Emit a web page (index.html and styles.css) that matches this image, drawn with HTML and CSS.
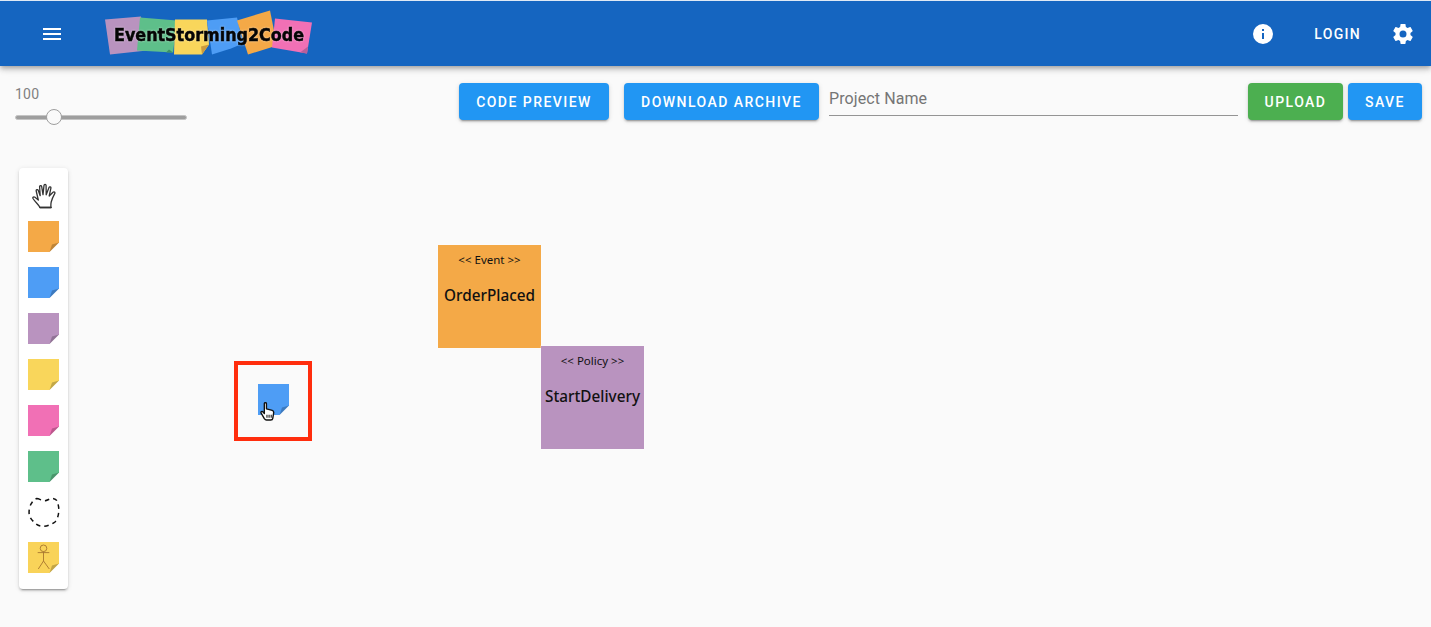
FILE: index.html
```html
<!DOCTYPE html>
<html lang="en">
<head>
<meta charset="utf-8">
<title>EventStorming2Code</title>
<link rel="stylesheet" href="styles.css">
</head>
<body>
<svg class="defs" width="0" height="0" aria-hidden="true">
  <symbol id="note" viewBox="0 0 31 31">
    <polygon points="0,0 31,0 31,21.5 21.5,31 0,31" fill="currentColor"/>
    <polygon points="21.5,31 31,21.5 24,23.5" fill="#000" fill-opacity=".22"/>
  </symbol>
</svg>
<header class="appbar">
  <button class="icon-btn menu-btn" aria-label="menu">
    <svg class="icon" viewBox="0 0 24 24"><path d="M3,6H21V8H3V6M3,11H21V13H3V11M3,16H21V18H3V16Z"/></svg>
  </button>
  <svg class="logo" viewBox="104 9.5 210 48" role="img">
    <polygon points="105,19 141,16 147,50 110,54" fill="#b993bf"/>
    <polygon points="140,17 177,20 173,52 137,50" fill="#5ebf8a"/>
    <polygon points="169,49 173,52 166,52" fill="#3f8f63"/>
    <polygon points="175,19 207,19 209,44 202,54 174,54" fill="#f9d65b"/>
    <polygon points="202,54 209,44 201,46" fill="#c99a3e"/>
    <polygon points="207,20 237,17 243,43 231,48 212,54" fill="#4e9df5"/>
    <polygon points="237,20 270,10 277,45 248,54" fill="#f4a947"/>
    <polygon points="275,18 312,22 307,53 272,47" fill="#f170b5"/>
    <polygon points="300,52 307,53 308,46" fill="#b85f9a"/>
    <text class="logo-text" x="114" y="40" textLength="190" lengthAdjust="spacingAndGlyphs">EventStorming2Code</text>
  </svg>
  <div class="appbar-right">
    <svg class="icon info" viewBox="0 0 24 24"><path d="M13,9H11V7H13M13,17H11V11H13M12,2A10,10 0 0,0 2,12A10,10 0 0,0 12,22A10,10 0 0,0 22,12A10,10 0 0,0 12,2Z"/></svg>
    <span class="login">LOGIN</span>
    <svg class="icon gear" viewBox="0 0 24 24"><path d="M12,15.5A3.5,3.5 0 0,1 8.5,12A3.5,3.5 0 0,1 12,8.5A3.5,3.5 0 0,1 15.5,12A3.5,3.5 0 0,1 12,15.5M19.43,12.97C19.47,12.65 19.5,12.33 19.5,12C19.5,11.67 19.47,11.34 19.43,11L21.54,9.37C21.73,9.22 21.78,8.95 21.66,8.73L19.66,5.27C19.54,5.05 19.27,4.96 19.05,5.05L16.56,6.05C16.04,5.66 15.5,5.32 14.87,5.07L14.5,2.42C14.46,2.18 14.25,2 14,2H10C9.75,2 9.54,2.18 9.5,2.42L9.13,5.07C8.5,5.32 7.96,5.66 7.44,6.05L4.95,5.05C4.73,4.96 4.46,5.05 4.34,5.27L2.34,8.73C2.21,8.95 2.27,9.22 2.46,9.37L4.57,11C4.53,11.34 4.5,11.67 4.5,12C4.5,12.33 4.53,12.65 4.57,12.97L2.46,14.63C2.27,14.78 2.21,15.05 2.34,15.27L4.34,18.73C4.46,18.95 4.73,19.03 4.95,18.95L7.44,17.94C7.96,18.34 8.5,18.68 9.13,18.93L9.5,21.58C9.54,21.82 9.75,22 10,22H14C14.25,22 14.46,21.82 14.5,21.58L14.87,18.93C15.5,18.67 16.04,18.34 16.56,17.94L19.05,18.95C19.27,19.03 19.54,18.95 19.66,18.73L21.66,15.27C21.78,15.05 21.73,14.78 21.54,14.63L19.43,12.97Z"/></svg>
  </div>
</header>
<main class="board">
  <section class="toolbar">
    <div class="zoom">
      <div class="zoom-value">100</div>
      <div class="slider"><span class="thumb"></span></div>
    </div>
    <div class="actions">
      <button class="btn blue code">CODE PREVIEW</button>
      <button class="btn blue download">DOWNLOAD ARCHIVE</button>
      <label class="field"><span>Project Name</span></label>
      <button class="btn green">UPLOAD</button>
      <button class="btn blue save">SAVE</button>
    </div>
  </section>
  <nav class="palette">
    <svg class="hand" viewBox="0 0 24 26" fill="#fff" stroke="#333" stroke-width="1.3" stroke-linejoin="round" stroke-linecap="round">
      <path d="M8 24.5 C6.5 21.5 3.5 19.5 1 15.5 C0.4 14.3 1.8 13.4 3 14.3 L6.3 17 L4.2 8 C3.9 6.6 5.7 6 6.2 7.3 L8.2 12.7 L7.6 3.8 C7.5 2.4 9.4 2.2 9.7 3.6 L11 11.7 L12 2.4 C12.2 1 14 1.1 14.1 2.5 L14.2 11.8 L17 4.6 C17.5 3.3 19.2 3.9 18.9 5.2 L17.2 13 L21 9.2 C22 8.3 23.4 9.4 22.7 10.6 C21.2 13.3 20 16 19.2 19 C18.8 21 18.8 22.8 19 24.5 Z"/>
      <path d="M8 24.5 H19" stroke-width="1.6"/>
    </svg>
    <svg class="note orange"><use href="#note"/></svg>
    <svg class="note blue-note"><use href="#note"/></svg>
    <svg class="note purple"><use href="#note"/></svg>
    <svg class="note yellow"><use href="#note"/></svg>
    <svg class="note pink"><use href="#note"/></svg>
    <svg class="note green-note"><use href="#note"/></svg>
    <svg class="note boundary-note" viewBox="0 0 31 31"><path class="boundary" d="M8.7 .6 C11.5 .8 14 2.8 17 2.7 C19.5 2.6 22.5 0 25 .4 C27.5 .8 28.8 2 29.3 3.7 C30.5 7 31.2 11 30.6 15 C30.2 18.5 29 22 27 24 C23.5 26.5 19 28.3 15 28.4 C12 28.3 9 27 7 25 C4.5 22.8 2 20 1.3 17 C.6 13 1.5 8 3.7 5 C5 3 6.8 1 8.7 .6Z"/></svg>
    <svg class="note actor" viewBox="0 0 31 31">
      <use href="#note" width="31" height="31"/>
      <g class="stick"><circle cx="15.5" cy="6.3" r="3.3"/><path d="M15.5 9.6V19M9.7 10.6H21.3M15.5 19L10.3 27M15.5 19L21.3 27"/></g>
    </svg>
  </nav>
  <div class="sticker event">
    <div class="stereotype">&lt;&lt; Event &gt;&gt;</div>
    <div class="name">OrderPlaced</div>
  </div>
  <div class="sticker policy">
    <div class="stereotype">&lt;&lt; Policy &gt;&gt;</div>
    <div class="name">StartDelivery</div>
  </div>
  <div class="highlight">
    <svg class="note blue-note"><use href="#note"/></svg>
    <svg class="pointer" viewBox="0 0 14 18" fill="#fff" stroke="#111" stroke-width="1.3" stroke-linejoin="round">
      <path d="M4 1.5 C4 .5 6 .5 6 1.5 V6.5 L11.5 8 C12.8 8.4 13 9.3 12.8 10.5 L12 15.5 C11.9 16.5 11 17 10 17 H6 C5 17 4.5 16.5 4 15.8 L1 10.5 C.4 9.3 1.8 8.5 2.7 9.4 L4 11Z"/>
      <path d="M6.5 12V15M8.5 12V15M10.5 12V15" fill="none" stroke-width="1"/>
    </svg>
  </div>
</main>
</body>
</html>
```
FILE: styles.css
```css
* { box-sizing: border-box; }
html, body { margin: 0; height: 100%; }
body {
  width: 1431px;
  height: 627px;
  overflow: hidden;
  background: #fafafa;
  font-family: Roboto, "Liberation Sans", sans-serif;
  display: flex;
  flex-direction: column;
}
.defs { position: absolute; }
.appbar {
  position: relative;
  z-index: 2;
  height: 66px;
  flex: none;
  display: flex;
  align-items: center;
  background: #1565c0;
  border-top: 1px solid #dfe9f5;
  box-shadow: 0 2px 4px -1px rgba(0,0,0,.2), 0 4px 5px rgba(0,0,0,.14), 0 1px 10px rgba(0,0,0,.12);
  color: #fff;
  padding-left: 28px;
}
.icon { width: 24px; height: 24px; fill: #fff; display: block; }
.icon-btn {
  width: 48px;
  height: 48px;
  padding: 12px;
  border: 0;
  background: none;
}
.logo { width: 210px; height: 48px; margin-left: 28px; overflow: visible; }
.logo-text {
  font-family: "DejaVu Sans", sans-serif;
  font-weight: 700;
  font-size: 18px;
  fill: #050505;
  stroke: #050505;
  stroke-width: .5px;
  filter: drop-shadow(0 0 1px rgba(255,255,255,.55));
}
.appbar-right {
  margin-left: auto;
  display: flex;
  align-items: center;
  padding-right: 16px;
}
.login {
  font-size: 14px;
  font-weight: 500;
  letter-spacing: 1.3px;
  margin: 0 30px 0 39px;
}
.board {
  position: relative;
  flex: 1;
  min-height: 0;
}
.toolbar {
  display: flex;
  justify-content: space-between;
  padding: 17px 9px 0 15px;
  height: 102px;
}
.zoom { width: 172px; padding-top: 3px; }
.zoom-value {
  font-size: 14px;
  line-height: 16px;
  color: #808080;
  letter-spacing: .2px;
}
.slider {
  position: relative;
  height: 5px;
  margin-top: 13px;
  border-radius: 3px;
  background: #9e9e9e;
  border: 1px solid #c4c4c4;
}
.thumb {
  position: absolute;
  left: 30px;
  top: -7px;
  width: 16px;
  height: 16px;
  border-radius: 50%;
  background: #fafafa;
  border: 1px solid #9e9e9e;
}
.actions { display: flex; align-items: flex-start; }
.btn {
  height: 37px;
  border: 0;
  border-radius: 4px;
  color: #fff;
  font: 500 14px Roboto, sans-serif;
  letter-spacing: 1.45px;
  padding: 0;
  width: 95px;
  box-shadow: 0 3px 1px -2px rgba(0,0,0,.2), 0 2px 2px rgba(0,0,0,.14), 0 1px 5px rgba(0,0,0,.12);
}
.blue { background: #2196f3; }
.green { background: #4caf50; }
.code { width: 150px; }
.download { margin-left: 15px; width: 195px; }
.save { margin-left: 5px; width: 74px; }
.field {
  width: 409px;
  height: 33px;
  margin: 0 10px;
  border-bottom: 1px solid #949494;
  color: #757575;
  font-size: 16px;
  line-height: 32px;
  display: block;
  letter-spacing: .1px;
}
.palette {
  width: 49px;
  margin-left: 19px;
  height: 421px;
  background: #fff;
  border-radius: 4px;
  box-shadow: 0 3px 1px -2px rgba(0,0,0,.2), 0 2px 2px rgba(0,0,0,.14), 0 1px 5px rgba(0,0,0,.12);
  display: flex;
  flex-direction: column;
  align-items: center;
  padding-top: 15px;
  row-gap: 15px;
}
.hand { width: 24px; height: 26px; margin-left: 1px; margin-bottom: -3px; flex: none; }
.note { width: 31px; height: 31px; flex: none; display: block; overflow: visible; }
.palette .actor { margin-top: -2px; }
.palette .boundary-note { margin-top: 1px; }
.orange { color: #f4a947; }
.blue-note { color: #4e9df5; }
.purple { color: #b993bf; }
.yellow { color: #f9d65b; }
.pink { color: #f170b5; }
.green-note { color: #5ebf8a; }
.actor { color: #f9d359; }
.boundary {
  fill: none;
  stroke: #111;
  stroke-width: 1.5;
  stroke-dasharray: 4.5 4;
}
.stick { fill: none; stroke: #a8762f; stroke-width: .9; }
.sticker {
  position: absolute;
  width: 103px;
  height: 103px;
  text-align: center;
  color: #111;
  font-family: "Noto Sans", sans-serif;
  box-shadow: 0 0 0 .5px rgba(255,255,255,.5);
}
.event { left: 438px; top: 179px; background: #f4a947; }
.policy { left: 541px; top: 280px; background: #b993bf; }
.stereotype { font-size: 11.5px; line-height: 14px; margin-top: 8px; }
.name { font-size: 15.3px; font-weight: 500; line-height: 20px; margin-top: 18px; white-space: nowrap; }
.highlight {
  position: absolute;
  left: 234px;
  top: 295px;
  width: 78px;
  height: 80px;
  border: 4px solid #ff2d0d;
  padding: 19px 20px;
}
.pointer {
  position: absolute;
  left: 22px;
  top: 37px;
  width: 15px;
  height: 19px;
}
```
